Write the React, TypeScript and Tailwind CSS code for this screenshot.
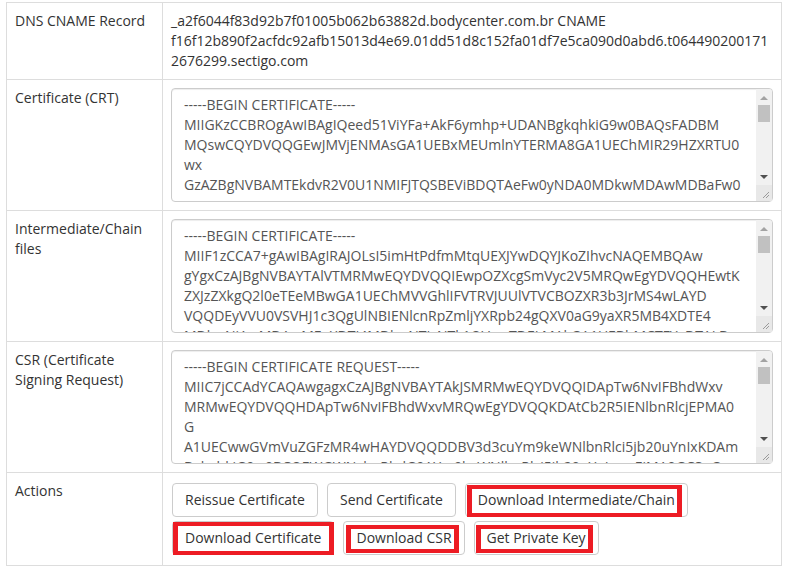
import React from "react";

const crt = `-----BEGIN CERTIFICATE-----
MIIGKzCCBROgAwIBAgIQeed51ViYFa+AkF6ymhp+UDANBgkqhkiG9w0BAQsFADBM
MQswCQYDVQQGEwJMVjENMAsGA1UEBxMEUmlnYTERMA8GA1UEChMIR29HZXRTU0wx
GzAZBgNVBAMTEkdvR2V0U1NMIFJTQSBEViBDQTAeFw0yNDA0MDkwMDAwMDBaFw0y
NTA0MDkyMzU5NTlaMBsxGTAXBgNVBAMTEGJvZHljZW50ZXIuY29tLmJyMIIBIjAN
BgkqhkiG9w0BAQEFAAOCAQ8AMIIBCgKCAQEAx3kq5ZP2lH8v0c1UqHn3m6sO2yTf
-----END CERTIFICATE-----`;

const chain = `-----BEGIN CERTIFICATE-----
MIIF1zCCA7+gAwIBAgIRAJOLsI5imHtPdfmMtqUEXJYwDQYJKoZIhvcNAQEMBQAw
gYgxCzAJBgNVBAYTAlVTMRMwEQYDVQQIEwpOZXcgSmVyc2V5MRQwEgYDVQQHEwtK
ZXJzZXkgQ2l0eTEeMBwGA1UEChMVVGhlIFVTRVJUUlVTVCBOZXR3b3JrMS4wLAYD
VQQDEyVVU0VSVHJ1c3QgUlNBIENlcnRpZmljYXRpb24gQXV0aG9yaXR5MB4XDTE4
MDkwNjAwMDAwMFoXDTI4MDkwNTIzNTk1OVowTDELMAkGA1UEBhMCTFYxDTALBgNV
-----END CERTIFICATE-----`;

const csr = `-----BEGIN CERTIFICATE REQUEST-----
MIIC7jCCAdYCAQAwgagxCzAJBgNVBAYTAkJSMRMwEQYDVQQIDApTw6NvIFBhdWxv
MRMwEQYDVQQHDApTw6NvIFBhdWxvMRQwEgYDVQQKDAtCb2R5IENlbnRlcjEPMA0G
A1UECwwGVmVuZGFzMR4wHAYDVQQDDBV3d3cuYm9keWNlbnRlci5jb20uYnIxKDAm
BgkqhkiG9w0BCQEWGWNvbnRhdG9AYm9keWNlbnRlci5jb20uYnIwggEiMA0GCSqG
-----END CERTIFICATE REQUEST-----`;

// red markers drawn over some of the buttons
type Mark = { l: number; r: number; t: number; b: number };

function Btn({ label, mark }: { label: string; mark?: Mark }) {
  return (
    <button className="relative h-[34px] px-3 border border-[#ccc] rounded bg-white text-[#333] text-sm leading-5 whitespace-nowrap">
      {label}
      {mark && (
        <span
          className="absolute border-x-[5px] border-y-[4px] border-[#ed1c24] pointer-events-none"
          style={{ left: mark.l, right: mark.r, top: mark.t, bottom: mark.b }}
        />
      )}
    </button>
  );
}

// classic scrollbar look, laid over the textarea's right edge
function FakeScrollbar() {
  return (
    <div className="absolute top-px right-px bottom-px w-[16px] flex flex-col bg-[#f1f1f1] rounded-r-[3px]">
      <div className="h-[16px] flex items-center justify-center">
        <svg width="8" height="5" viewBox="0 0 8 5">
          <path d="M0 5 L4 1 L8 5 Z" fill="#a3a3a3" />
        </svg>
      </div>
      <div className="flex-1 px-[2px]">
        <div className="h-[17px] bg-[#c1c1c1]" />
      </div>
      <div className="h-[16px] flex items-center justify-center">
        <svg width="8" height="5" viewBox="0 0 8 5">
          <path d="M0 0 L8 0 L4 4 Z" fill="#505050" />
        </svg>
      </div>
      <div className="h-[16px] bg-[#e8e8e8] flex items-end justify-end p-[2px]">
        <svg width="10" height="10" viewBox="0 0 10 10">
          <path d="M9 3 L3 9 M9 6 L6 9" stroke="#9a9a9a" strokeWidth="1" />
        </svg>
      </div>
    </div>
  );
}

function Pem({ value }: { value: string }) {
  return (
    <div className="relative">
      <textarea
        readOnly
        rows={5}
        defaultValue={value}
        className="block w-full h-[114px] pl-3 pr-[29px] py-1.5 border border-[#ccc] rounded bg-white text-[#555] text-sm leading-5 shadow-[inset_0_1px_1px_rgba(0,0,0,0.075)] outline-none resize-none overflow-hidden"
      />
      <FakeScrollbar />
    </div>
  );
}

export default function App() {
  const td = "border border-[#ddd] p-2 align-top text-sm leading-5";
  return (
    <div className="min-h-screen bg-white pt-[2px] pl-[6px] font-['Open_Sans',sans-serif] text-[#333]">
      <table className="w-[776px] table-fixed border-collapse">
        <colgroup>
          <col className="w-[156px]" />
          <col />
        </colgroup>
        <tbody>
          <tr>
            <td className={td}>DNS CNAME Record</td>
            <td className={td + " break-words"}>
              _a2f6044f83d92b7f01005b062b63882d.bodycenter.com.br CNAME
              f16f12b890f2acfdc92afb15013d4e69.01dd51d8c152fa01df7e5ca090d0abd6.t0644902001712676299.sectigo.com
            </td>
          </tr>
          <tr>
            <td className={td}>Certificate (CRT)</td>
            <td className={td}>
              <Pem value={crt} />
            </td>
          </tr>
          <tr>
            <td className={td}>Intermediate/Chain files</td>
            <td className={td}>
              <Pem value={chain} />
            </td>
          </tr>
          <tr>
            <td className={td}>CSR (Certificate Signing Request)</td>
            <td className={td}>
              <Pem value={csr} />
            </td>
          </tr>
          <tr>
            <td className={td}>Actions</td>
            <td className={td}>
              <div className="flex flex-wrap gap-x-[9px] gap-y-1 py-[2px] pl-[1px]">
                <Btn label="Reissue Certificate" />
                <Btn label="Send Certificate" />
                <Btn label="Download Intermediate/Chain" mark={{ l: 1, r: 5, t: 1, b: -1 }} />
                <Btn label="Download Certificate" mark={{ l: 0, r: -1, t: 0, b: -1 }} />
                <Btn label="Download CSR" mark={{ l: 2, r: 5, t: 3, b: 1 }} />
                <Btn label="Get Private Key" mark={{ l: 1, r: 5, t: 3, b: 1 }} />
              </div>
            </td>
          </tr>
        </tbody>
      </table>
    </div>
  );
}
